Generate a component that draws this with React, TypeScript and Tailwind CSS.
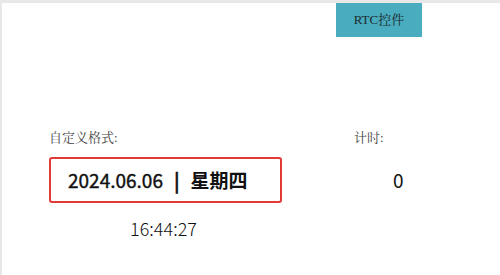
export default function App() {
  return (
    <div className="w-[500px] h-[275px] bg-[#e8e8e8] pt-[3px] pl-[2px] overflow-hidden">
      <div className="h-full bg-white flex flex-col font-['Noto_Sans_CJK_SC',sans-serif]">
        <div className="flex pl-[334px]">
          <div className="w-[86px] h-[34px] bg-[#4aacbf] flex items-center justify-center text-[13px] text-[#1a2a2e] font-['Liberation_Serif','Noto_Serif_CJK_SC',serif]">
            RTC控件
          </div>
        </div>

        <div className="flex mt-[93px]">
          <div className="flex flex-col pl-[47px] w-[352px]">
            <div className="text-[13px] leading-[16px] text-[#444] font-['Liberation_Serif','Noto_Serif_CJK_SC',serif]">
              自定义格式:
            </div>
            <div className="mt-[11px] w-[233px] h-[46px] border-2 border-[#e23a36] rounded-[3px] flex items-center pl-[17px] text-[19px] text-[#111] [-webkit-text-stroke:0.4px_#111]">
              <span>2024.06.06</span>
              <span className="ml-[11px] font-bold">|</span>
              <span className="ml-[11px] font-bold [-webkit-text-stroke:0]">星期四</span>
            </div>
            <div className="mt-[13px] w-[229px] text-center text-[18px] leading-[24px] text-[#111] font-light">
              16:44:27
            </div>
          </div>
          <div className="flex flex-col">
            <div className="text-[13px] leading-[16px] text-[#444] font-['Liberation_Serif','Noto_Serif_CJK_SC',serif]">
              计时:
            </div>
            <div className="mt-[11px] h-[46px] flex items-center pl-[39px] text-[19px] text-[#111]">
              0
            </div>
          </div>
        </div>
      </div>
    </div>
  );
}
